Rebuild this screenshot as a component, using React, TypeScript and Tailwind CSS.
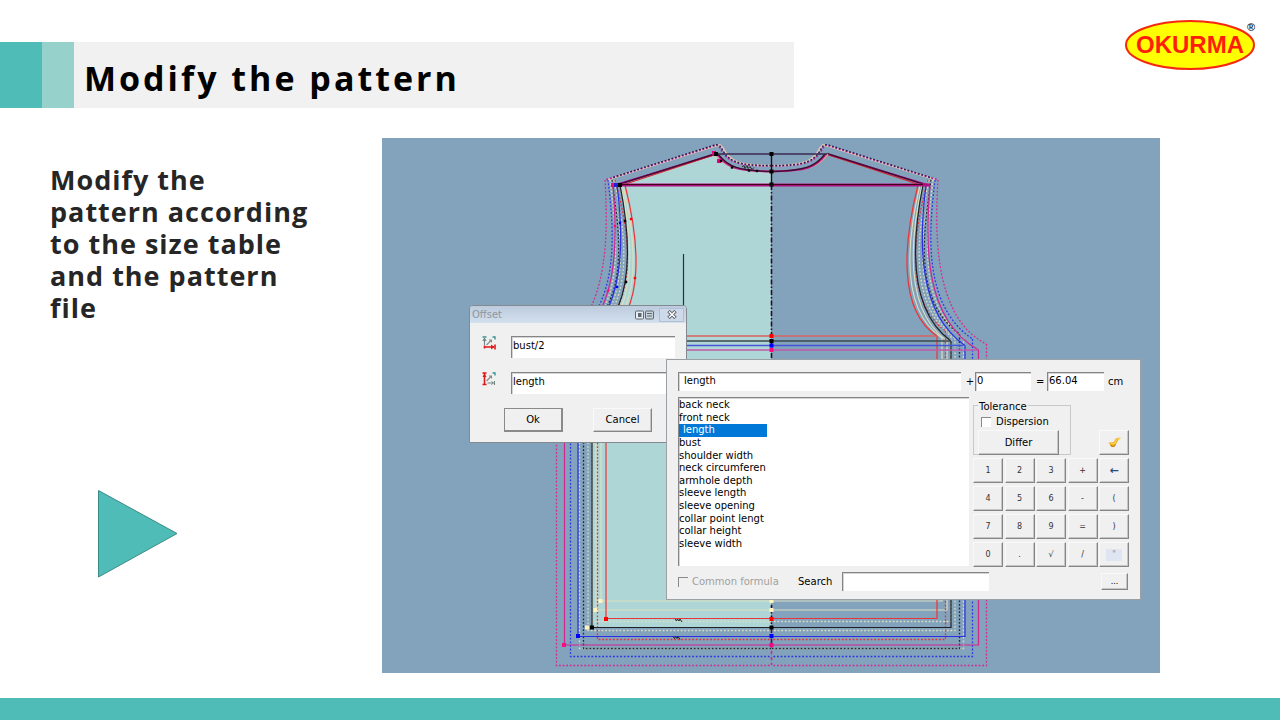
import { useState } from "react";

type Size = {
  name: string;
  color: string;
  side: number;
  hem: number;
  dotted?: boolean;
  armhole: string;
  bust: number;
};

const CREAM = "#d9dfc0";

// Right half of every graded size, the left half is mirrored around x = 771.5
const sizes: Size[] = [
  { name: "cream-xs", color: CREAM, side: 942, hem: 601, bust: 338, armhole: "M920 185 C907 240 900 310 942 338" },
  { name: "cream-s", color: CREAM, side: 947, hem: 610, bust: 340, armhole: "M922 185 C910 240 904 310 947 341" },
  { name: "cream-s-seam", color: CREAM, side: 951, hem: 621.5, bust: 336, dotted: true, armhole: "M929 180 C918 230 907 300 951 336" },
  { name: "cream-m", color: CREAM, side: 955, hem: 630.5, bust: 338, dotted: true, armhole: "M932 180 C921 230 911 302 955 338" },
  { name: "cream-l", color: CREAM, side: 963.5, hem: 648.5, bust: 338, dotted: true, armhole: "M933 180 C927 230 916 302 963 338" },
  { name: "red-seam", color: "#e2323c", side: 945.5, hem: 639.5, bust: 331, dotted: true, armhole: "M928 180 C914 230 903 300 945.5 331" },
  { name: "black-seam", color: "#26292e", side: 959.5, hem: 648.5, bust: 334, dotted: true, armhole: "M931 180 C924 230 912 300 959.5 334" },
  { name: "blue-seam", color: "#2b35e8", side: 972.5, hem: 656.5, bust: 339, dotted: true, armhole: "M935 180 C929 230 922 305 972.5 339" },
  { name: "pink-seam", color: "#d42a8e", side: 986.5, hem: 665.5, bust: 344, dotted: true, armhole: "M938 180 C935 230 933 318 986.5 344" },
  { name: "red", color: "#ee3338", side: 937, hem: 618.5, bust: 336, armhole: "M918 185 C904 240 897 310 937 336" },
  { name: "black", color: "#1d2024", side: 951, hem: 627.5, bust: 341, armhole: "M923 185 C912 240 908 310 951 341" },
  { name: "blue", color: "#2a2fe6", side: 965, hem: 636.5, bust: 345.5, armhole: "M926 185 C919 240 917 312 965 345.5" },
  { name: "pink", color: "#cf2590", side: 978.5, hem: 645, bust: 350, armhole: "M930 185 C926 240 922 318 978.5 350" },
];

const nodes: [number, number, string][] = [
  [714, 153, "#e6007e"], [716, 154, "#000"], [719, 161, "#e6007e"], [613, 185, "#f0087f"], [616, 185, "#2222dd"], [620, 185, "#000"],
  [771.5, 154, "#000"], [771.5, 171.5, "#000"], [771.5, 184.5, "#000"],
  [771.5, 336, "#f00"], [771.5, 341, "#000"], [771.5, 345.5, "#00f"], [771.5, 350, "#ff0a80"],
  [600.5, 601, "#fff3c0"], [595.5, 610, "#fff3c0"], [587, 627.5, "#fff3c0"], [606, 619, "#f00"],
  [592, 627.5, "#000"], [578, 636, "#00f"], [564, 645, "#ff0a80"],
  [771.5, 601, "#fff3c0"], [771.5, 610, "#fff3c0"], [771.5, 619, "#f00"], [771.5, 627.5, "#000"],
  [771.5, 636, "#00f"], [771.5, 645, "#f0087f"],
];

const dots: [number, number, string][] = [
  [631, 219, "#f00"], [635, 278, "#f00"], [625, 221, "#000"], [626, 282, "#000"],
  [620, 223, "#00f"], [617, 287, "#00f"], [615, 226, "#ff0a80"], [608, 291, "#ff0a80"],
  [721, 161, "#000"], [732, 167.5, "#000"], [749, 170.5, "#000"], [757, 171, "#000"],
];

const measures = [
  "back neck", "front neck", "length", "bust", "shoulder width", "neck circumferen",
  "armhole depth", "sleeve length", "sleeve opening", "collar point lengt", "collar height", "sleeve width",
];

const keys = [
  ["1", "2", "3", "+", "←"],
  ["4", "5", "6", "-", "("],
  ["7", "8", "9", "=", ")"],
  ["0", ".", "√", "/", "\""],
];

const sunken = "border-t border-l border-[#858585] bg-white text-black outline-none shadow-[inset_1px_1px_0_#d4d4d4]";
const raised = "border-t border-l border-r border-b border-t-[#f9f9f9] border-l-[#f9f9f9] border-r-[#858585] border-b-[#858585] bg-[#f0f0f0] shadow-[inset_-1px_-1px_0_#c6c6c6]";

function HalfPiece({ s }: { s: Size }) {
  return (
    <g fill="none" stroke={s.color} strokeWidth={s.dotted ? 1.3 : 1.2} strokeDasharray={s.dotted ? "1.8 1.8" : undefined}>
      <path d={s.armhole} />
      <path d={`M${s.side} ${s.bust} V${s.hem} H771.5`} />
    </g>
  );
}

function Yoke() {
  return (
    <g fill="none">
      <path d="M828 154.5 L930 185.5" stroke="#b0149a" strokeWidth="1.6" />
      <path d="M826 154 L919 184.5" stroke="#d8222c" strokeWidth="1.2" />
      <path d="M827 153.5 L923 184" stroke="#4a0834" strokeWidth="1.4" />
      <path d="M771.5 171.5 C806 171 818 168 828 154" stroke="#d9a090" strokeWidth="1.4" />
      <path d="M771.5 171.5 C806 171 816 168 826 154" stroke="#c01890" strokeWidth="2" />
      <path d="M771.5 171.5 C804 171 815 167 825 154" stroke="#35102c" strokeWidth="1.3" />
      <path d="M771.5 165.5 C804 166 814 161 820 148 L823 145 L826 145.5 L935 179.5" stroke="#e0c4b4" strokeWidth="1.8" />
      <path d="M771.5 166 C806 166 816 162 823 148 L826 145 L938 180" stroke="#c0209a" strokeWidth="1.6" strokeDasharray="1.8 1.8" />
      <path d="M771.5 165.5 C804 165.5 814 162 821 149 L823 146 L827 144.5 L932 178" stroke="#28205a" strokeWidth="1.4" strokeDasharray="1.8 1.8" />
    </g>
  );
}

function PatternDrawing() {
  const mirror = "matrix(-1 0 0 1 1543 0)";
  return (
    <svg viewBox="382 138 778 535" className="block w-full" role="img" aria-label="Graded body pattern">
      <rect x="382" y="138" width="778" height="535" fill="#83a2bc" />
      <path
        d="M771.5 171.5 C739 171 728 167 717 154 L620 185 C631 240 635 310 592 341 V627.5 H771.5 Z"
        fill="#aed6d7"
      />
      {sizes.map((s) => (
        <g key={s.name}>
          <HalfPiece s={s} />
          <g transform={mirror}>
            <HalfPiece s={s} />
          </g>
        </g>
      ))}
      <Yoke />
      <g transform={mirror}>
        <Yoke />
      </g>
      {/* chest lines */}
      <path d="M606 336 H937" stroke="#d9625f" strokeWidth="1.4" />
      <path d="M592 341 H951" stroke="#3b494d" strokeWidth="1.4" />
      <path d="M578 345.5 H965" stroke="#4656da" strokeWidth="1.4" />
      <path d="M564 350 H978" stroke="#c05aa8" strokeWidth="1.6" />
      {/* back width and neck lines */}
      <path d="M613 185 H930" stroke="#b0107f" strokeWidth="3" />
      <path d="M620 184.5 H923" stroke="#40051c" strokeWidth="1.2" />
      <path d="M716 154 H827" stroke="#3a2a50" strokeWidth="1.4" />
      {/* centre line and grain line */}
      <path d="M771.5 154 V185" stroke="#111" strokeWidth="1.4" />
      <path d="M771.5 185 V665" stroke="#7c8fb0" strokeWidth="1" />
      <path d="M771.5 185 V628" stroke="#2b0a2a" strokeWidth="1.6" strokeDasharray="5 2 1.5 2" />
      <path d="M771.5 628 V645" stroke="#3a1060" strokeWidth="1.6" strokeDasharray="5 2 1.5 2" />
      <path d="M771.5 645 V665" stroke="#cf2590" strokeWidth="1.6" strokeDasharray="3 3" />
      <path d="M683.5 254 V306" stroke="#1f3538" strokeWidth="1.2" />
      {nodes.map(([x, y, c], i) => (
        <rect key={i} x={x - 2} y={y - 2} width="4" height="4" fill={c} />
      ))}
      {dots.map(([x, y, c], i) => (
        <rect key={i} x={x - 1.2} y={y - 1.2} width="2.4" height="2.4" fill={c} />
      ))}
      {/* notch marks */}
      <g fill="none" stroke="#222" strokeWidth="1">
        <path d="M742 167 l2 -1.5 l1 3 l2 -3 l1 3 l2 -2 l2 3 l2 -2" />
        <path d="M675 619 l1.5 2 l1 -2 l1.5 2 l1 -2 l2 3" />
        <path d="M673 636.5 l1.5 2 l1 -2 l1.5 2 l1 -2 l2 3" />
      </g>
    </svg>
  );
}

function OffsetIcon({ vertical }: { vertical?: boolean }) {
  return (
    <svg width="14" height="14" viewBox="0 0 14 14" fill="none" aria-hidden="true">
      <path d="M10.5 1 H13 V3.5" stroke="#3b9490" strokeWidth="1.4" />
      <path d="M4.5 9 L9.5 4 M7 4 H9.5 V6.5" stroke="#868a8a" strokeWidth="1.1" />
      {vertical ? (
        <>
          <path d="M2.5 1 V12.5 M0.5 12.5 H4.5 M0.5 1 H4.5" stroke="#e01818" strokeWidth="1.6" />
          <path d="M0.5 5 L2.5 1.5 L4.5 5 Z" fill="#e01818" />
          <path d="M5.5 11 H11.5 M12.5 9 V13 M9.5 9.5 L11.5 11 L9.5 12.5" stroke="#708484" strokeWidth="1" />
        </>
      ) : (
        <>
          <path d="M0.5 1 H4.500" stroke="#3b9490" strokeWidth="1.4" />
          <path d="M2.5 9 V2.5 M0.8 5 L2.5 2.5 L4.2 5" stroke="#708484" strokeWidth="1.1" />
          <path d="M2 11 H12 M2.5 9.5 V12.5 M13 8.5 V13.5" stroke="#e01818" strokeWidth="1.6" />
          <path d="M9 8.5 L12.5 11 L9 13.5 Z" fill="#e01818" />
        </>
      )}
    </svg>
  );
}

function OffsetWindow() {
  return (
    <section className="absolute left-[87px] top-[167px] h-[138px] w-[218px] overflow-hidden rounded-t border border-[#83898f] bg-[#f0f0f0]">
      <header className="flex h-[17px] items-center bg-linear-to-b from-[#bccbdd] to-[#d3e0ee] px-0.5 text-[#8e979f]">
        <h2 className="flex-1">Offset</h2>
        <svg width="20" height="10" viewBox="0 0 20 10" fill="none" stroke="#5d6771" aria-hidden="true">
          <rect x="0.5" y="1" width="8" height="8" rx="1" fill="#e9eef3" />
          <rect x="3" y="3" width="3.5" height="4" fill="#5d6771" stroke="none" />
          <rect x="10.5" y="1" width="8" height="8" rx="1" fill="#c9d2db" />
          <path d="M12 3.5 H17 M12 6 H17" />
        </svg>
        <button aria-label="Close" className="ml-1 flex h-[14px] w-[25px] items-center justify-center border border-[#b0bfd3] bg-[#cedaea]">
          <svg width="10" height="9" viewBox="0 0 10 9" aria-hidden="true">
            <path d="M1.5 1 L8.5 8 M8.5 1 L1.5 8" stroke="#5d6269" strokeWidth="3.4" />
            <path d="M2 1.5 L8 7.5 M8 1.5 L2 7.5" stroke="#fff" strokeWidth="1.6" />
          </svg>
        </button>
      </header>
      <div className="flex flex-col gap-[14px] pt-[13px] pr-[11px] pl-3">
        <label className="flex items-start justify-between">
          <OffsetIcon />
          <input aria-label="Horizontal offset" defaultValue="bust/2" className={`${sunken} h-[22px] w-[164px] pb-[5px] pl-px`} />
        </label>
        <label className="flex items-start justify-between">
          <OffsetIcon vertical />
          <input aria-label="Vertical offset" defaultValue="length" className={`${sunken} h-[22px] w-[164px] pb-[5px] pl-px`} />
        </label>
      </div>
      <div className="mt-[14px] flex gap-[30px] pl-[34px]">
        <button className="h-[24px] w-[59px] border border-r-2 border-b-2 border-[#8a8a8a] bg-[#f0f0f0]">Ok</button>
        <button className={`${raised} h-[24px] w-[59px]`}>Cancel</button>
      </div>
    </section>
  );
}

function FormulaWindow() {
  const [selected, setSelected] = useState("length");

  return (
    <section className="absolute top-[221px] left-[284px] flex h-[241px] w-[475px] flex-col border border-[#9aa0a4] bg-[#f0f0f0] px-[11px] pt-[12px]">
      <div className="flex items-center">
        <input aria-label="Formula" defaultValue="length" className={`${sunken} h-[19px] w-[283px] pb-[3px] pl-[5px]`} />
        <span className="w-[14px] pl-1 text-center">+</span>
        <input aria-label="Addend" defaultValue="0" className={`${sunken} h-[19px] w-[56px] pb-[3px] pl-px`} />
        <span className="w-[16px] pl-[5px]">=</span>
        <input aria-label="Result" defaultValue="66.04" className={`${sunken} h-[19px] w-[57px] pb-[3px] pl-px`} />
        <span className="pl-1">cm</span>
      </div>

      <div className="mt-[6px] flex gap-1">
        <div className={`${sunken} h-[169px] w-[291px] pt-px`}>
          <ul role="listbox" aria-label="Measures" className="grid h-[151px] w-[88px] grid-rows-12">
            {measures.map((m) => (
              <li
                key={m}
                role="option"
                aria-selected={m === selected}
                onClick={() => setSelected(m)}
                className={`flex items-center whitespace-nowrap ${m === selected ? "bg-[#0078d7] pl-1 text-white" : ""}`}
              >
                {m}
              </li>
            ))}
          </ul>
        </div>

        <div className="flex flex-1 flex-col gap-[3px]">
          <div className="flex items-end justify-between">
            <fieldset className="h-[58px] w-[98px] border border-[#c8c8c8] pl-1">
              <legend className="px-px pt-1 leading-[12px]">Tolerance</legend>
              <label className="flex h-[17px] items-center gap-[5px] pl-[3px]">
                <input type="checkbox" className="h-[10px] w-[10px] appearance-none border-t border-l border-[#8a8a8a] bg-white" />
                Dispersion
              </label>
              <button className={`${raised} h-[25px] w-[81px]`}>Differ</button>
            </fieldset>
            <button aria-label="Clear" className={`${raised} flex h-[25px] w-[30px] items-center justify-center`}>
              <svg width="15" height="12" viewBox="0 0 15 12" aria-hidden="true">
                <path d="M14 1 C11 0 8 1 7.5 4 C7 6 4 5 1 6 L3 7 C3 10 6 11 8 9 C10 7 9 4 14 1 Z" fill="#e9a61c" />
                <path d="M13 1.5 C10 1.5 9 3 8.5 5 C8 7 5 7 3.5 6.5" fill="none" stroke="#ffd84a" strokeWidth="1.2" />
                <path d="M3.5 8 C4.5 10 7 10 8.500 8" fill="none" stroke="#b87412" />
              </svg>
            </button>
          </div>
          <div className="grid grid-cols-[30px_30px_30px_30px_30px] justify-between gap-y-[3px] text-[8px] text-[#333]">
            {keys.flat().map((k) => (
              <button key={k} className={`${raised} flex h-[25px] items-center justify-center`}>
                {k === "←" && <span className="text-[11px] font-bold text-[#2b4a7c]">{k}</span>}
                {k === "\"" && <span className="h-3 w-4 bg-[#dfe5f2] text-[#8c93a5]">{k}</span>}
                {k !== "←" && k !== "\"" && k}
              </button>
            ))}
          </div>
        </div>
      </div>

      <div className="mt-[5px] flex items-center">
        <label className="flex w-[120px] items-center gap-1 text-[#a0a0a0]">
          <input type="checkbox" disabled className="h-[10px] w-[10px] appearance-none border-t border-l border-[#8a8a8a] bg-[#f0f0f0]" />
          Common formula
        </label>
        <label htmlFor="search" className="w-[44px]">Search</label>
        <input id="search" className={`${sunken} h-[19px] w-[147px]`} />
        <button aria-label="More" className={`${raised} mr-px ml-auto flex h-[17px] w-[27px] items-center justify-center text-[8px]`}>...</button>
      </div>
    </section>
  );
}

function Logo() {
  return (
    <svg width="134" height="52" viewBox="0 0 134 52" role="img" aria-label="Okurma" className="mt-5 mr-[22px] shrink-0">
      <ellipse cx="66" cy="25" rx="64" ry="24" fill="#ffff00" stroke="#f5280f" strokeWidth="2" />
      <text x="66" y="33" textAnchor="middle" fontFamily="Liberation Sans, sans-serif" fontWeight="700" fontSize="24" fill="#ff1e0a">OKURMA</text>
      <text x="123" y="11" fontFamily="Liberation Sans, sans-serif" fontWeight="700" fontSize="11" fill="#222">®</text>
    </svg>
  );
}

export default function App() {
  return (
    <div className="flex min-h-screen flex-col bg-white font-['Open_Sans','Noto_Sans',sans-serif]">
      <header className="flex items-start justify-between">
        <div className="mt-[42px] flex h-[66px] w-[62%] items-center bg-[#f1f1f1]">
          <div className="h-full w-[42px] bg-[#50bcb7]" />
          <div className="h-full w-[32px] bg-[#96d1cb]" />
          <h1 className="pt-1.5 pl-[10px] text-[34px] leading-[48px] font-bold tracking-[3px] whitespace-nowrap text-black">
            Modify the pattern
          </h1>
        </div>
        <Logo />
      </header>

      <main className="mt-[30px] flex items-start">
        <div className="w-[382px] shrink-0 pt-[26px] pl-[50px]">
          <p className="w-[270px] text-[27px] leading-[32px] font-bold tracking-[1px] text-[#262626]">
            Modify the pattern according to the size table and the pattern file
          </p>
          <svg width="80" height="88" viewBox="0 0 80 88" className="mt-[166px] ml-12" aria-hidden="true">
            <path d="M0.5 0.5 L79 43.5 L0.5 87 Z" fill="#50bcb7" stroke="#3a8b87" />
          </svg>
        </div>
        <div className="relative mr-[120px] min-w-0 flex-1 font-['DejaVu_Sans',sans-serif] text-[10px] leading-[12px] text-black">
          <PatternDrawing />
          <OffsetWindow />
          <FormulaWindow />
        </div>
      </main>

      <footer className="mt-auto h-[22px] bg-[#50bcb7]" />
    </div>
  );
}
